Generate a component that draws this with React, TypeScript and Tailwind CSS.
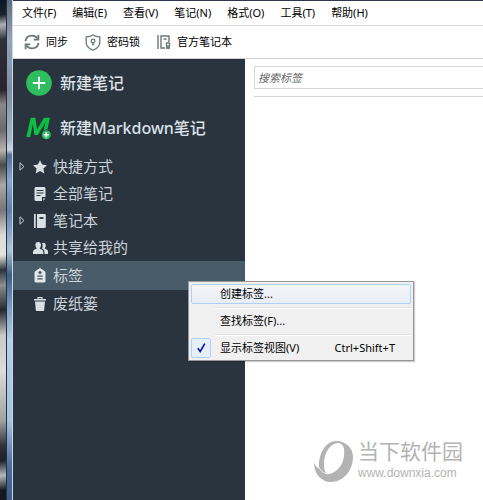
import type { ReactNode } from "react";

const MENUS = ["文件(F)", "编辑(E)", "查看(V)", "笔记(N)", "格式(O)", "工具(T)", "帮助(H)"];

const SyncIcon = () => (
  <svg width="16" height="16" viewBox="0 0 16 16" fill="none" stroke="#6b787b" strokeWidth="1.8">
    <path d="M1.4 7.2C2 3.8 4.800 1.700 8 1.700c2.300 0 4.200 1 5.500 2.900" />
    <path d="M14.600 8.800C14 12.200 11.200 14.300 8 14.300c-2.300 0-4.200-1-5.500-2.900" />
    <path d="M14.400 0.800v4.800H9.800" />
    <path d="M1.600 15.200v-4.800h4.600" />
  </svg>
);

const ShieldIcon = () => (
  <svg width="16" height="17" viewBox="0 0 16 17" fill="none" stroke="#6b787b" strokeWidth="1.3">
    <path d="M8 1C6 2.300 3.600 2.900 1.200 2.900v5.300c0 3.700 2.600 6.300 6.800 7.900 4.200-1.600 6.800-4.200 6.800-7.900V2.900C12.400 2.900 10 2.300 8 1z" />
    <circle cx="8" cy="7" r="1.800" />
    <path d="M8 8.800v2.800" strokeWidth="1.600" />
  </svg>
);

const NotebookOutlineIcon = () => (
  <svg width="14" height="14" viewBox="0 0 14 14" fill="none" stroke="#6b787b" strokeWidth="1.400">
    <path d="M1 0v14M12 7V1H4v12h4" />
    <path d="M6.500 4h3.200" />
    <circle cx="11" cy="9.400" r="1.700" />
    <path d="M9.800 10.500V13.600l1.200-.8 1.200.8v-3.100" />
  </svg>
);

const AddIcon = () => (
  <svg width="26" height="26" viewBox="0 0 26 26">
    <circle cx="13" cy="13" r="12.800" fill="#2dbe60" />
    <path d="M13 6.800v12.400M6.800 13h12.400" stroke="#fff" strokeWidth="1.900" />
  </svg>
);

const MarkdownIcon = () => (
  <svg width="26" height="24" viewBox="0 0 26 24">
    <path d="M0.300 21L4.700 1.800h4.700L11 13.500 18 1.800h6l-2.700 12-3.800.8 2-8.300L11.900 19H8.400L6.900 8.200 4.200 21z" fill="#0cbf43" />
    <circle cx="20.300" cy="18.800" r="5.300" fill="#2a343e" />
    <circle cx="20.300" cy="18.800" r="4.500" fill="#2dbe60" />
    <path d="M20.300 16.200v5.200M17.700 18.800h5.200" stroke="#fff" strokeWidth="1.600" />
  </svg>
);

const StarIcon = () => (
  <svg width="14" height="14" viewBox="0 0 14 14" fill="#d9e0e6">
    <path d="M7 .2l2.100 4.300 4.800.7-3.500 3.300.9 4.900L7 11.100l-4.300 2.300.9-4.900L.1 5.200l4.800-.7z" />
  </svg>
);

const NoteIcon = () => (
  <svg width="14" height="14" viewBox="0 0 14 14">
    <path d="M3 0h8a1.500 1.500 0 0 1 1.500 1.500V10H9v4H3a1.500 1.500 0 0 1-1.500-1.500v-11A1.500 1.500 0 0 1 3 0zM10.200 11.400h2.300L10.200 13.800z" fill="#d9e0e6" />
    <path d="M3.500 3.500h7M3.500 6h7M3.500 8.500h4" stroke="#2a343e" strokeWidth="1.100" />
  </svg>
);

const NotebookIcon = () => (
  <svg width="14" height="14" viewBox="0 0 14 14">
    <path d="M1 0h1.700v14H1zM4 0h7.500A1.300 1.300 0 0 1 12.800 1.300v11.400A1.300 1.300 0 0 1 11.500 14H4z" fill="#d9e0e6" />
    <path d="M6.500 4h4" stroke="#2a343e" strokeWidth="1.800" />
  </svg>
);

const PeopleIcon = () => (
  <svg width="15" height="12" viewBox="0 0 15 12" fill="#d9e0e6">
    <path d="M5.200 0C7 0 8 1.300 8 3c0 1.300-.5 2.300-1.200 3v.8c1.800.5 3.500 1.300 3.500 3V12H0V9.800c0-1.700 1.800-2.500 3.600-3V6C2.900 5.300 2.400 4.300 2.400 3c0-1.700 1-3 2.800-3z" />
    <path d="M9 1.300c.4-.3.900-.5 1.400-.5 1.500 0 2.400 1.100 2.400 2.600 0 1.100-.4 2-1 2.600v.7c1.500.4 3.200 1.100 3.200 2.600V12h-3.600V9.800c0-1.500-.9-2.500-2.500-3.200.4-.8.800-1.800.8-3 0-.8-.3-1.600-.7-2.300z" />
  </svg>
);

const TagIcon = () => (
  <svg width="12" height="15" viewBox="0 0 12 15">
    <path d="M6 0l4.500 3c.8.500 1 1 1 1.800V13a1.500 1.500 0 0 1-1.500 1.500H2A1.500 1.500 0 0 1 .5 13V4.800c0-.8.200-1.300 1-1.800z" fill="#e1e8ec" />
    <circle cx="6" cy="4.500" r="1.600" fill="#475b69" />
    <path d="M3.300 8.200h5.400M3.300 10.800h5.400" stroke="#475b69" strokeWidth="1.200" />
  </svg>
);

const TrashIcon = () => (
  <svg width="12" height="14" viewBox="0 0 12 14">
    <path d="M4 2V.6h4V2" fill="none" stroke="#d9e0e6" strokeWidth="1.100" />
    <path d="M0 2h12v1.600H0zM1 4.600h10l-.8 8.400a1 1 0 0 1-1 1H2.800a1 1 0 0 1-1-1z" fill="#d9e0e6" />
  </svg>
);

interface NavItem {
  label: string;
  icon: ReactNode;
  expandable?: boolean;
  active?: boolean;
}

const NAV_ITEMS: NavItem[] = [
  { label: "快捷方式", icon: <StarIcon />, expandable: true },
  { label: "全部笔记", icon: <NoteIcon /> },
  { label: "笔记本", icon: <NotebookIcon />, expandable: true },
  { label: "共享给我的", icon: <PeopleIcon /> },
  { label: "标签", icon: <TagIcon />, active: true },
  { label: "废纸篓", icon: <TrashIcon /> },
];

function Sidebar() {
  return (
    <aside className="w-[232px] shrink-0 bg-[#2a343e] pt-3 text-[#dbe2e8]">
      <button className="flex h-6 w-full items-center gap-2 pl-[13px] text-base font-medium">
        <AddIcon />
        新建笔记
      </button>
      <button className="mt-[21px] flex h-6 w-full items-center gap-2 pl-[13px] text-base font-medium">
        <MarkdownIcon />
        新建Markdown笔记
      </button>
      <nav className="mt-[13px] text-[#cdd5dc]">
        {NAV_ITEMS.map((item) => (
          <button
            key={item.label}
            className={`flex w-full items-center text-[15px] ${item.active ? "h-[29px] bg-[#475b69]" : "h-[27px]"}`}
          >
            <span className="flex w-[18px] justify-center">
              {item.expandable && (
                <svg width="6" height="9" viewBox="0 0 6 9" fill="none" stroke="#c4ccd2">
                  <path d="M1 .8v7.400l4-3.700z" />
                </svg>
              )}
            </span>
            <span className="flex w-[18px] justify-center">{item.icon}</span>
            <span className="ml-1">{item.label}</span>
          </button>
        ))}
      </nav>
    </aside>
  );
}

function MenuSeparator() {
  return <div className="mt-[3px] mb-[2px] ml-6 border-t border-b border-t-[#e0e0e0] border-b-white" />;
}

function ContextMenu() {
  return (
    <div
      role="menu"
      className="absolute top-[281px] left-[188px] w-[226px] border border-[#979797] bg-[#f0f0f0] p-[2px] shadow-[1px_1px_1px_rgba(0,0,0,0.2)]"
    >
      <button
        role="menuitem"
        className="flex h-5 w-full items-center rounded-[2px] border border-[#aecff7] bg-linear-to-b from-[#f3f5f8] to-[#e8eef6] pl-7"
      >
        创建标签...
      </button>
      <MenuSeparator />
      <button role="menuitem" className="flex h-5 w-full items-center pl-[29px]">
        查找标签(F)...
      </button>
      <MenuSeparator />
      <button role="menuitemcheckbox" aria-checked="true" className="flex h-5 w-full items-center pr-4">
        <span className="mr-[9px] flex h-5 w-5 items-center justify-center rounded-[2px] border border-[#aecff7] bg-[#e6eff9]">
          <svg width="9" height="10" viewBox="0 0 9 10" fill="none" stroke="#0c12a1" strokeWidth="1.600">
            <path d="M.8 5.200l2.400 3.300L7.800.6" />
          </svg>
        </span>
        显示标签视图(V)
        <span className="ml-auto">Ctrl+Shift+T</span>
      </button>
    </div>
  );
}

function Watermark() {
  return (
    <div className="absolute right-5 bottom-[17px] flex items-center gap-[5px] text-[#b3b3b3]">
      <svg width="39" height="41" viewBox="0 0 39 41" fill="currentColor">
        <path
          fillRule="evenodd"
          d="M22 0C32 0 39 7 39 16c0 14-10 25-22 25C7 41 0 33 0 21.500c1 3 3 5 5 6C4 14 11 0 22 0zM24 2C14 3 10 15 10 23c0 5 1 9 4 10 6 0 15-7 16-18C31 7 29 2 24 2z"
        />
        <path d="M4.500 26c2 4 5.500 6.500 10 7" fill="none" stroke="#fff" strokeWidth="0.800" />
      </svg>
      <div className="flex flex-col">
        <span className="text-[21px] leading-6">当下软件园</span>
        <span className="font-['Liberation_Sans',sans-serif] text-xs leading-5">www.downxia.com</span>
      </div>
    </div>
  );
}

export default function App() {
  return (
    <div className="relative flex min-h-screen overflow-hidden bg-white font-['Noto_Sans','Noto_Sans_CJK_SC',sans-serif] text-[11px] text-black">
      {/* desktop behind the window, then the glass window frame */}
      <div className="w-[6px] shrink-0 bg-[linear-gradient(172deg,#0d1624_0%,#1b222e_3%,#b0b0b4_5%,#30303a_8%,#2a232b_18%,#8b888a_21%,#6e6b6c_26%,#b8b5b0_30%,#4a4a4a_33%,#a9a7a2_37%,#77757a_42%,#dddbd6_47%,#e4e2dd_51%,#2b333c_54%,#8d8f90_57%,#23292f_62%,#c9c9c7_67%,#dcdcda_74%,#a2a2a2_84%,#30343a_89%,#1c2025_92%,#b5b8ba_95%,#15181c_98%)]" />
      <div className="w-[7px] shrink-0 border-r border-l border-r-[#cfd9e4] border-l-[#26303c] bg-[linear-gradient(180deg,#5d6b7e_0%,#94a4b8_8%,#7d8da4_18%,#a7b7ca_28%,#c9d6e4_30%,#4f7097_31%,#86a9cc_36%,#5d82aa_42%,#a8c6e2_50%,#3d5e85_55%,#6c92bb_60%,#b3cfea_68%,#a4c4e4_84%,#4a6e9c_93%,#3c5f8c_100%)]" />

      <div className="flex min-w-0 flex-1 flex-col border-t border-[#2c3950]">
        <div className="flex h-[25px] shrink-0 items-center gap-4 border-b border-[#d9d9d9] pl-[9px] whitespace-nowrap">
          {MENUS.map((menu) => (
            <button key={menu}>{menu}</button>
          ))}
        </div>
        <div className="flex h-[33px] shrink-0 items-center gap-[17px] border-b border-[#d0d0d0] pl-[11px] whitespace-nowrap">
          <button className="flex items-center gap-[6px]">
            <SyncIcon />
            同步
          </button>
          <button className="flex items-center gap-[6px]">
            <ShieldIcon />
            密码锁
          </button>
          <button className="flex items-center gap-[6px]">
            <NotebookOutlineIcon />
            官方笔记本
          </button>
        </div>
        <div className="flex flex-1">
          <Sidebar />
          <main className="min-w-0 flex-1 pt-[7px] pl-[9px]">
            <input
              aria-label="搜索标签"
              placeholder="搜索标签"
              className="block h-[23px] w-full border border-r-0 border-[#d6d6d6] pl-[3px] italic placeholder:text-[#666]"
            />
            <div className="mt-[7px] border-t border-[#d6d6d6]" />
          </main>
        </div>
      </div>

      <ContextMenu />
      <Watermark />
    </div>
  );
}
